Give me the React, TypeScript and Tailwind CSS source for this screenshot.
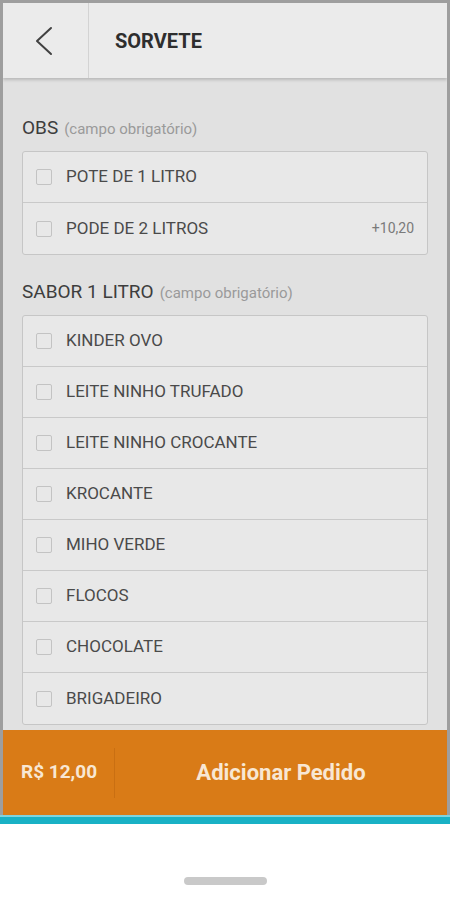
const OBS_OPTIONS = [
    { label: 'POTE DE 1 LITRO', price: '' },
    { label: 'PODE DE 2 LITROS', price: '+10,20' },
];

const SABORES = [
    'KINDER OVO',
    'LEITE NINHO TRUFADO',
    'LEITE NINHO CROCANTE',
    'KROCANTE',
    'MIHO VERDE',
    'FLOCOS',
    'CHOCOLATE',
    'BRIGADEIRO',
];

export default function App() {
    return (
        <div className="w-[450px] h-[900px] bg-white flex flex-col font-['Roboto','Liberation_Sans',sans-serif] overflow-hidden">
            <div className="h-[815px] flex flex-col border-[3px] border-b-0 border-[#9e9e9e] bg-[#e1e1e1] overflow-hidden">
                {/* Header */}
                <header className="h-[75px] shrink-0 flex bg-[#ebebeb] shadow-[0_2px_3px_rgba(0,0,0,0.18)] relative z-10">
                    <button className="w-[86px] flex items-center justify-center border-r border-[#d3d3d3] text-[#414141]">
                        <svg width="20" height="30" viewBox="0 0 20 30" fill="none" className="-ml-[4px]">
                            <polyline points="17,2 3,15 17,28" stroke="currentColor" strokeWidth="2" strokeLinecap="round" strokeLinejoin="round" />
                        </svg>
                    </button>
                    <h1 className="flex items-center pl-[26px] text-[20px] font-bold text-[#2e2e2e]">SORVETE</h1>
                </header>

                {/* Content */}
                <main className="flex-1 overflow-hidden px-[19px] pt-[38px]">
                    <Section title="OBS">
                        {OBS_OPTIONS.map((o) => (
                            <OptionRow key={o.label} label={o.label} price={o.price} />
                        ))}
                    </Section>
                    <div className="h-[25px]" />
                    <Section title="SABOR 1 LITRO">
                        {SABORES.map((s) => (
                            <OptionRow key={s} label={s} />
                        ))}
                    </Section>
                </main>

                {/* Footer */}
                <footer className="h-[85px] shrink-0 flex items-center bg-[#d97b17]">
                    <div className="w-[111px] pl-[18px] text-[19px] font-bold text-[#f8e7d3]">R$ 12,00</div>
                    <div className="w-px h-[50px] bg-[#c96f12]" />
                    <div className="flex-1 text-center text-[22px] font-bold text-[#f8e7d3]">Adicionar Pedido</div>
                </footer>
            </div>
            <div className="h-[2px] bg-[#7fd3de]" />
            <div className="h-[7px] bg-[#19b1c5]" />
            <div className="flex-1 flex items-end justify-center pb-[15px]">
                <div className="w-[83px] h-[8px] rounded-full bg-[#c9c9c9]" />
            </div>
        </div>
    );
}

function Section({ title, children }: { title: string; children: React.ReactNode }) {
    return (
        <section>
            <h2 className="h-[24px] mb-[11px] flex items-baseline gap-[6px] text-[#3d3d3d]">
                <span className="text-[19px] leading-[24px]">{title}</span>
                <span className="text-[15px] text-[#9a9a9a]">(campo obrigatório)</span>
            </h2>
            <div className="border border-[#c6c6c6] rounded-[3px] bg-[#e8e8e8] divide-y divide-[#c9c9c9]">
                {children}
            </div>
        </section>
    );
}

function OptionRow({ label, price }: { label: string; price?: string }) {
    return (
        <div className="h-[51px] flex items-center pl-[13px] pr-[13px]">
            <span className="w-[16px] h-[16px] rounded-[2px] border-[1.5px] border-[#c3c3c3] shrink-0" />
            <span className="ml-[14px] flex-1 text-[17px] text-[#4a4a4a]">{label}</span>
            {price && <span className="text-[14px] text-[#7a7a7a]">{price}</span>}
        </div>
    );
}
